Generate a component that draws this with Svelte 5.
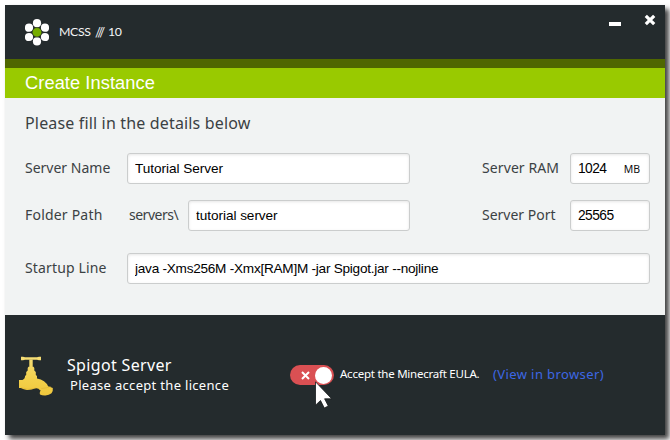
<script>
  let name = $state('Tutorial Server');
  let folder = $state('tutorial server');
  let ram = $state('1024');
  let port = $state('25565');
  let startup = $state('java -Xms256M -Xmx[RAM]M -jar Spigot.jar --nojline');
  const petals = [[12, 4.2], [20, 8.7], [20, 18], [12, 22.4], [4, 18], [4, 8.7]];
</script>

<main class="window">
  <header class="titlebar">
    <svg class="logo" width="24" height="27" viewBox="0 0 24 27">
      {#each petals as [x, y]}
        <circle cx={x} cy={y} r="4.1" fill="#fff" />
      {/each}
      <circle cx="12" cy="13.3" r="4.7" fill="#76ad00" stroke="#242b2d" stroke-width=".5" />
    </svg>
    <span class="brand">MCSS</span>
    <span class="slashes">///</span>
    <span class="version">10</span>
    <div class="controls">
      <svg width="12" height="4" viewBox="0 0 12 4"><path d="M0 0h12v4H0z" fill="#fff" /></svg>
      <svg width="12" height="12" viewBox="0 0 12 12"><path d="M1.800 1.800l8.400 8.400M10.200 1.800l-8.400 8.400" stroke="#fff" stroke-width="3.200" /></svg>
    </div>
  </header>
  <div class="stripe"></div>
  <div class="heading"><span>Create Instance</span></div>

  <section class="form">
    <div class="intro"><span>Please fill in the details below</span></div>
    <div class="row first">
      <label for="name"><span>Server Name</span></label>
      <div class="field wide"><input id="name" bind:value={name} /></div>
      <label class="right" for="ram"><span class="l-ram">Server RAM</span></label>
      <div class="field small"><input id="ram" class="i-num" bind:value={ram} /><span class="unit">MB</span></div>
    </div>
    <div class="row second">
      <label for="folder"><span class="l-folder">Folder Path</span></label>
      <div class="prefix"><span>servers\</span></div>
      <div class="field medium"><input id="folder" bind:value={folder} /></div>
      <label class="right" for="port"><span>Server Port</span></label>
      <div class="field small"><input id="port" class="i-num" bind:value={port} /></div>
    </div>
    <div class="row third">
      <label for="startup"><span class="l-startup">Startup Line</span></label>
      <div class="field full"><input id="startup" class="i-startup" bind:value={startup} /></div>
    </div>
  </section>

  <footer>
    <svg class="tap" width="36" height="40" viewBox="0 0 36 40">
      <defs>
        <linearGradient id="brass" gradientUnits="userSpaceOnUse" x1="0" y1="0" x2="0" y2="40">
          <stop offset="0" stop-color="#f5de78" />
          <stop offset=".6" stop-color="#f3d04a" />
          <stop offset="1" stop-color="#efc63c" />
        </linearGradient>
      </defs>
      <g fill="url(#brass)">
        <path d="M2 .8h2l2 .5h12l2-.5h2v3.400h-2l-2-.5H6l-2 .5H2z" />
        <path d="M10.300 3.500h3.400v7.300h.8l.8 1.200v2.500l1.500 1.500v3l1.200 1v2.500q4 .6 7 2.800 3.600 2.500 4.600 6l-8.600 3q-1.500-2.500-4.500-2-4 1.700-8.500 1.600Q4.500 33.700 2 32H0v-8h3.500q2.200-1 2.500-3v-1l1.200-1v-3l1.500-1.500V12l.8-1.200h.8z" />
        <path d="M22.300 31.300l7.500-.8 4 1.500q.5 2.800-1.300 5.200-2.500 2-6 2.300-3.300.2-5.500-1-.8-1.500.3-3.500z" />
      </g>
      <path fill="none" stroke="#d9aa2b" stroke-opacity=".7" stroke-width=".6" d="M2 31.700q7 3 15 .3M22.300 32.500q5-.2 9.500-2" />
    </svg>
    <div class="product">
      <div class="p-title"><span>Spigot Server</span></div>
      <div class="p-sub"><span>Please accept the licence</span></div>
    </div>
    <div class="toggle">
      <svg width="9" height="9" viewBox="0 0 9 9"><path d="M1 1l7 7M8 1L1 8" stroke="#fff" stroke-width="2" /></svg>
      <i></i>
      <svg class="cursor" width="18" height="28" viewBox="0 0 18 28"><path d="M.5.8v23.400l5-4.700 3.800 7.500 4-2-3.700-7.200h7.100z" fill="#fff" stroke="#15191a" stroke-width=".8" /></svg>
    </div>
    <div class="eula"><span>Accept the Minecraft EULA.</span></div>
    <div class="link"><span>(View in browser)</span></div>
  </footer>
</main>

<style>
  :global(body) { margin: 0; background: #fff; overflow: hidden; }
  :global(#app) { display: flow-root; width: 670px; height: 440px; overflow: hidden; }
  .window {
    box-sizing: border-box; width: 660px; height: 430px; margin: 5px;
    display: flex; flex-direction: column;
    font-family: "Noto Sans", sans-serif; color: #3b4143;
    box-shadow: 4px 4px 5px rgba(0, 0, 0, .75);
  }
  span { white-space: nowrap; }
  .titlebar { height: 54px; background: #242b2d; display: flex; align-items: center; color: #f4f5f5; font: 12px/16px Lato, sans-serif; padding-left: 20px; }
  .logo { margin-right: 10px; }
  .brand { width: 36px; letter-spacing: -.35px; font-size: 12.3px; }
  .slashes { width: 13px; letter-spacing: -.8px; font-size: 13px; }
  .version { letter-spacing: -.3px; font-size: 12.3px; }
  .controls { margin-left: auto; padding-right: 9px; display: flex; gap: 23px; align-self: flex-start; padding-top: 9px; }
  .controls svg:first-child { margin-top: 8px; }
  .stripe { height: 9px; background: #4f6700; }
  .heading { height: 30px; background: #99ca00; color: #fff; font: 18.3px/30px "Liberation Sans", sans-serif; padding-left: 20px; letter-spacing: .06px; }
  .form { height: 217px; background: #f1f3f3; box-sizing: border-box; padding: 13px 15px 0 20px; }
  .intro { height: 24px; font-size: 16px; line-height: 24px; letter-spacing: .16px; }
  .row { display: flex; align-items: center; height: 31px; font-size: 14px; }
  .first { margin-top: 18px; }
  .second { margin-top: 16px; }
  .third { margin-top: 22px; }
  label { width: 102px; flex: none; line-height: 20px; padding-bottom: 2px; }
  label.right { margin-left: auto; width: 88px; }
  .l-folder { letter-spacing: .2px; }
  .l-startup { letter-spacing: .15px; }
  .l-ram { letter-spacing: .1px; }
  .prefix { width: 59px; padding: 0 0 2px 2px; letter-spacing: -.5px; }
  .field {
    box-sizing: border-box; height: 31px; border: 1px solid #cbcdcd; border-radius: 3px; background: #fff;
    box-shadow: inset 0 1px 3px rgba(0, 0, 0, .1); display: flex; align-items: center; padding: 0 7px;
  }
  .wide { width: 283px; }
  .medium { width: 222px; }
  .small { width: 80px; }
  .full { flex: 1; }
  input { border: 0; outline: 0; padding: 0; background: none; min-width: 0; width: 100%; font: 13.6px/18px "Liberation Sans", sans-serif; letter-spacing: -.05px; color: #000; }
  .i-startup { letter-spacing: -.25px; }
  .i-num { font-size: 13.8px; letter-spacing: -.55px; }
  .unit { font-size: 10.5px; color: #111; padding-right: 2px; }
  footer { height: 120px; background: #242b2d; display: flex; align-items: flex-start; color: #fff; }
  .tap { margin: 41px 0 0 14px; }
  .product { width: 223px; margin-left: 12px; padding-top: 39px; }
  .p-title { height: 22px; font-size: 16px; line-height: 22px; letter-spacing: .33px; }
  .p-sub { font-size: 13px; line-height: 18px; padding-left: 3px; letter-spacing: .31px; }
  .toggle { position: relative; width: 44px; height: 20px; box-sizing: border-box; border-radius: 10px; background: #da5053; margin-top: 50px; display: flex; align-items: center; justify-content: space-between; padding: 0 2px 0 11px; }
  .toggle i { width: 17px; height: 17px; border-radius: 50%; background: #fff; }
  .cursor { position: absolute; left: 25px; top: 16px; }
  .eula { margin: 50px 0 0 6px; width: 153px; font-size: 11.5px; line-height: 18px; letter-spacing: -.24px; }
  .link { margin-top: 50px; font-size: 13px; line-height: 19px; letter-spacing: .4px; color: #3d67e4; }
</style>
